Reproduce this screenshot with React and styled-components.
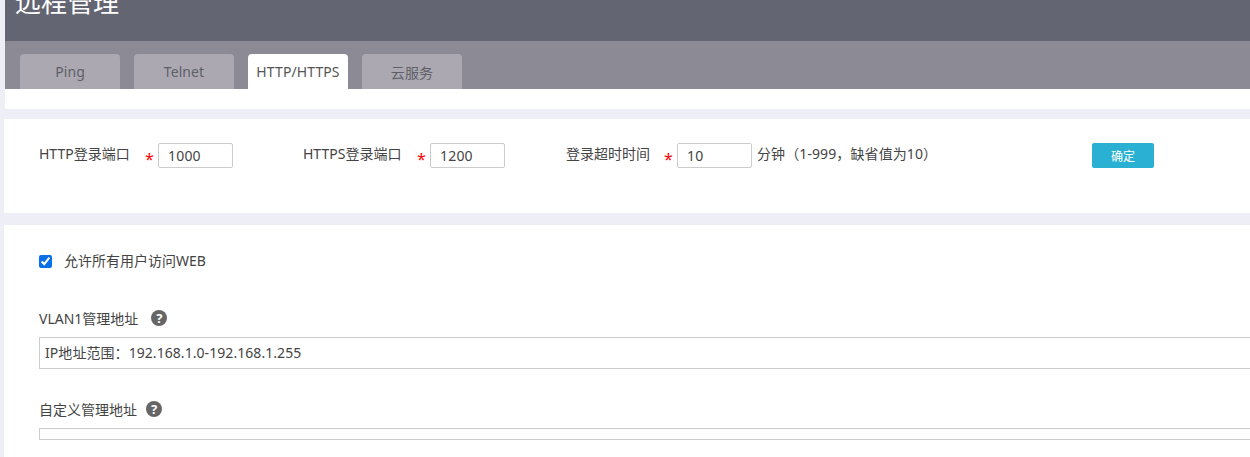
import React from "react";
import styled, { createGlobalStyle } from "styled-components";

const GlobalStyle = createGlobalStyle`
html, body {
  margin: 0;
  padding: 0;
  height: 100%;
  overflow: hidden;
  background: #eeeef6;
  font-family: "Noto Sans", "Noto Sans CJK SC", sans-serif;
  font-size: 14px;
  color: #444;
}
`;

const Page = styled.div`
width: 1250px;
height: 457px;
overflow: hidden;
display: flex;
flex-direction: column;
`;

const Top = styled.div`
margin-left: 5px;
`;

const Header = styled.div`
height: 41px;
background: #646572;
display: flex;
align-items: flex-end;
padding: 0 0 22px 10px;
box-sizing: border-box;
overflow: hidden;
`;

const Title = styled.h1`
margin: 0;
font-size: 26px;
line-height: 34px;
font-weight: 400;
color: #fff;
flex-shrink: 0;
`;

const TabBar = styled.div`
height: 48px;
box-sizing: border-box;
background: #8c8a95;
padding: 13px 0 0 15px;
display: flex;
gap: 14px;
`;

const Tab = styled.div`
width: 100px;
height: 35px;
border-radius: 4px 4px 0 0;
display: flex;
align-items: center;
justify-content: center;
letter-spacing: 0.1px;
background: ${({ $active }) => ($active ? "#fff" : "#aba8b2")};
color: ${({ $active }) => ($active ? "#555" : "#5f5f68")};
`;

const TabSpacer = styled.div`
height: 20px;
background: #fff;
`;

const Panel = styled.div`
margin-left: 4px;
background: #fff;
margin-top: ${({ $gap }) => $gap}px;
`;

const FormRow = styled.div`
height: 94px;
box-sizing: border-box;
padding: 24px 0 0 35px;
display: flex;
align-items: flex-start;
`;

const Field = styled.div`
width: ${({ $width }) => $width}px;
display: flex;
align-items: flex-start;
`;

const FieldLabel = styled.span`
width: ${({ $width }) => $width}px;
line-height: 22px;
color: #444;
white-space: nowrap;
`;

const Star = styled.span`
width: 13px;
line-height: 32px;
color: #f00;
font-size: 16px;
`;

const Input = styled.div`
width: 75px;
height: 25px;
box-sizing: border-box;
border: 1px solid #ccc;
border-radius: 2px;
padding-left: 9px;
line-height: 23px;
letter-spacing: 0.2px;
color: #444;
`;

const Hint = styled.span`
margin-left: 5px;
line-height: 22px;
letter-spacing: 0.1px;
color: #444;
white-space: nowrap;
`;

const SaveButton = styled.button`
width: 62px;
height: 25px;
border: none;
border-radius: 2px;
padding: 0;
background: #2ab0d2;
color: #fff;
font-family: inherit;
font-size: 12px;
`;

const AccessPanel = styled(Panel)`
height: 232px;
box-sizing: border-box;
padding: 27px 0 0 35px;
`;

const CheckRow = styled.label`
display: flex;
align-items: center;
gap: 12px;
height: 18px;
line-height: 18px;
`;

const Check = styled.input`
width: 13px;
height: 13px;
margin: 0;
accent-color: #0b6fe8;
`;

const SectionLabel = styled.div`
display: flex;
align-items: center;
gap: ${({ $iconGap }) => $iconGap}px;
height: 20px;
margin-top: ${({ $top }) => $top}px;
`;

const HelpIcon = styled.span`
width: 16px;
height: 16px;
border-radius: 50%;
background: #666;
color: #fff;
font-size: 13px;
font-weight: 700;
line-height: 16px;
text-align: center;
`;

const RangeBox = styled.div`
height: ${({ $height }) => $height}px;
box-sizing: border-box;
margin-top: ${({ $top }) => $top}px;
border: 1px solid #ccc;
border-right: none;
padding-left: 5px;
line-height: 29px;
letter-spacing: 0.06px;
color: #444;
`;

const tabs = ["Ping", "Telnet", "HTTP/HTTPS", "云服务"];

const App = () => {
  return (
    <Page>
      <GlobalStyle />
      <Top>
        <Header>
          <Title>远程管理</Title>
        </Header>
        <TabBar>
          {tabs.map((tab) => (
            <Tab key={tab} $active={tab === "HTTP/HTTPS"}>{tab}</Tab>
          ))}
        </TabBar>
        <TabSpacer />
      </Top>
      <Panel $gap={10}>
        <FormRow>
          <Field $width={264}>
            <FieldLabel $width={106}>HTTP登录端口</FieldLabel>
            <Star>*</Star>
            <Input>1000</Input>
          </Field>
          <Field $width={263}>
            <FieldLabel $width={114}>HTTPS登录端口</FieldLabel>
            <Star>*</Star>
            <Input>1200</Input>
          </Field>
          <Field $width={526}>
            <FieldLabel $width={98}>登录超时时间</FieldLabel>
            <Star>*</Star>
            <Input>10</Input>
            <Hint>分钟（1-999，缺省值为10）</Hint>
          </Field>
          <SaveButton>确定</SaveButton>
        </FormRow>
      </Panel>
      <AccessPanel $gap={12}>
        <CheckRow>
          <Check type="checkbox" defaultChecked />
          允许所有用户访问WEB
        </CheckRow>
        <SectionLabel $top={38} $iconGap={13}>
          VLAN1管理地址
          <HelpIcon>?</HelpIcon>
        </SectionLabel>
        <RangeBox $height={32} $top={9}>IP地址范围：192.168.1.0-192.168.1.255</RangeBox>
        <SectionLabel $top={30} $iconGap={9}>
          自定义管理地址
          <HelpIcon>?</HelpIcon>
        </SectionLabel>
        <RangeBox $height={12} $top={9} />
      </AccessPanel>
    </Page>
  );
};

export default App;
